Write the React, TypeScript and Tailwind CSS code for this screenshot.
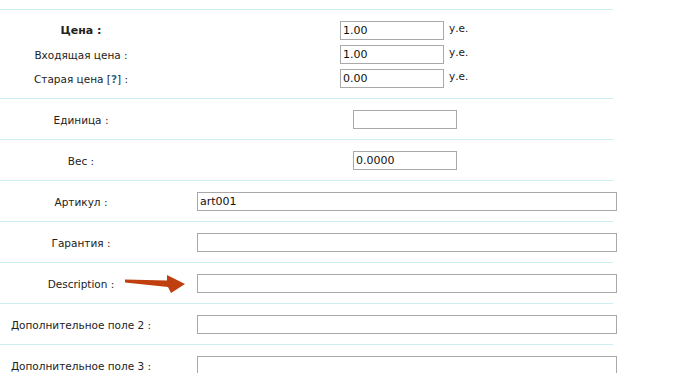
// Product edit form: price / unit / weight / SKU rows with separators
const font = { fontFamily: '"DejaVu Sans", Verdana, sans-serif' };

function Field({ value = '', w }: { value?: string; w: string }) {
  return (
    <input
      readOnly
      value={value}
      className={`block ${w} h-[19px] border border-[#a9a9a9] bg-white px-[2px] text-[11px] leading-[17px] text-[#111] outline-none`}
    />
  );
}

function Label({ children, bold }: { children: React.ReactNode; bold?: boolean }) {
  return (
    <div
      className={`w-[162px] shrink-0 text-center leading-[14px] text-[#222] ${bold ? 'text-[11px] font-bold' : 'text-[10.5px]'}`}
    >
      {children}
    </div>
  );
}

const wide = ['Артикул', 'Гарантия', 'Description', 'Дополнительное поле 2', 'Дополнительное поле 3'];
const values: Record<string, string> = { Артикул: 'art001' };

export default function App() {
  return (
    <div className="h-[373px] w-[681px] overflow-hidden bg-white" style={font}>
      <div className="mt-[9px] w-[613px] border-t border-[#cdeff4]">
        {/* price block */}
        <div className="flex flex-col gap-[5px] border-b border-[#cdeff4] pt-[11px] pb-[10px]">
          {[
            { l: <>Цена :</>, v: '1.00', b: true },
            { l: <>Входящая цена :</>, v: '1.00' },
            { l: <>Старая цена [<span className="font-bold text-[#2a6a8a]">?</span>] :</>, v: '0.00' },
          ].map((r, i) => (
            <div key={i} className="flex h-[19px] items-center">
              <Label bold={r.b}>{r.l}</Label>
              <div className="ml-[178px] flex items-start">
                <Field value={r.v} w="w-[104px]" />
                <span className="ml-[5px] mt-[1px] text-[10.5px] leading-[12px] text-[#222]">у.е.</span>
              </div>
            </div>
          ))}
        </div>

        {['Единица', 'Вес'].map((l) => (
          <div key={l} className="flex items-center border-b border-[#cdeff4] pt-[11px] pb-[10px]">
            <Label>{l} :</Label>
            <div className="ml-[191px]">
              <Field value={l === 'Вес' ? '0.0000' : ''} w="w-[104px]" />
            </div>
          </div>
        ))}

        {wide.map((l) => (
          <div key={l} className="relative flex items-center border-b border-[#cdeff4] pt-[11px] pb-[10px]">
            <Label>{l} :</Label>
            <div className="ml-[35px]">
              <Field value={values[l]} w="w-[420px]" />
            </div>
            {l === 'Description' && (
              <svg className="absolute left-[120px] top-[6px]" width="70" height="24" viewBox="120 268 70 24">
                <polygon
                  points="125,278.5 167,279.5 167,274 185,283 171,292 168,286 125,281.5"
                  fill="#bf3f0f"
                />
              </svg>
            )}
          </div>
        ))}
      </div>
    </div>
  );
}
